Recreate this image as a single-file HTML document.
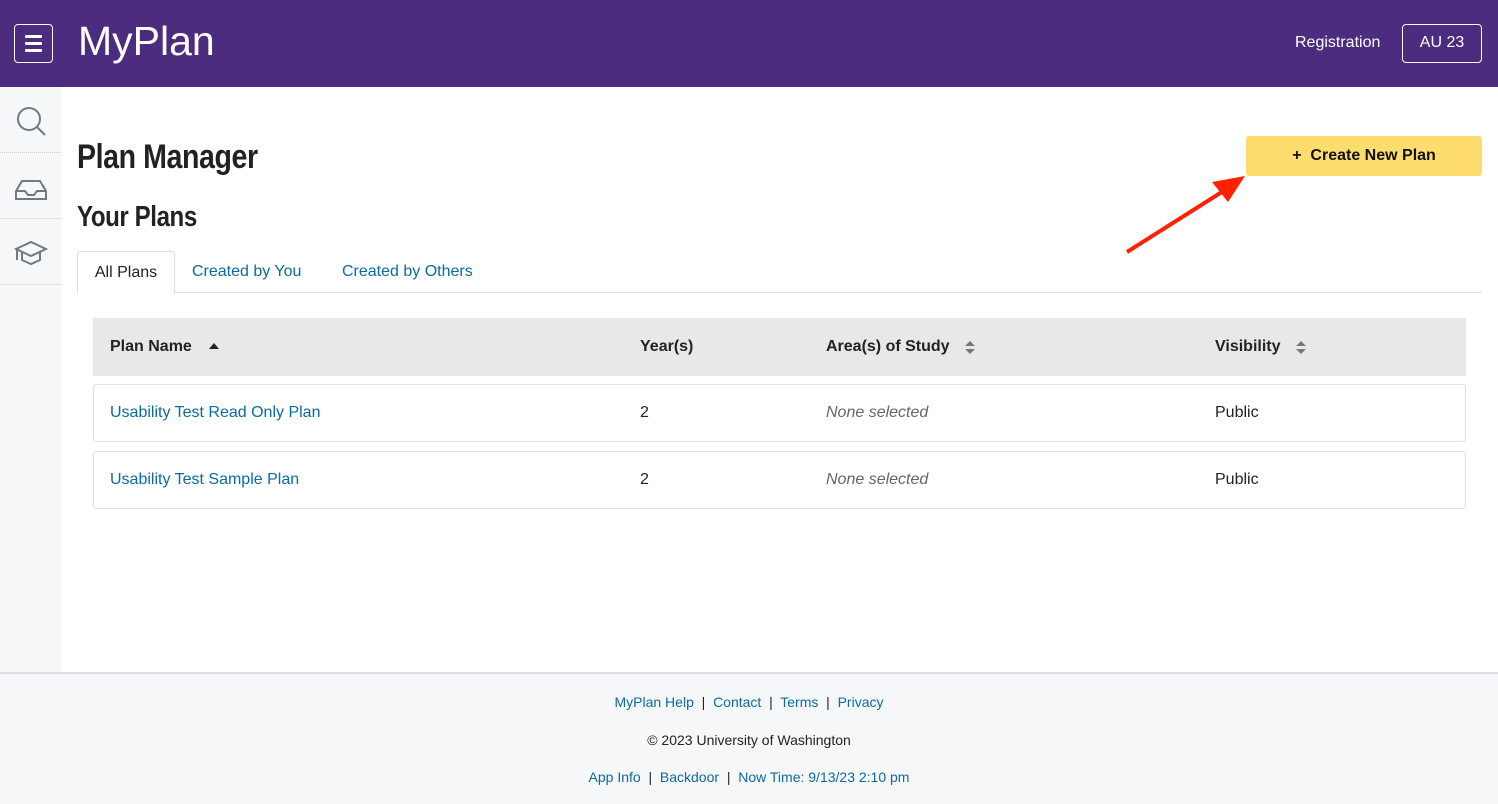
<!DOCTYPE html>
<html><head><meta charset="utf-8"><style>
*{box-sizing:border-box;margin:0;padding:0}
body{width:1498px;height:804px;overflow:hidden;font-family:"Liberation Sans",sans-serif;background:#fff;color:#222;position:relative}
.hdr{position:absolute;left:0;top:0;width:1498px;height:87px;background:#4b2c7f}
.burger{position:absolute;left:14px;top:24px;width:39px;height:39px;border:1.5px solid #fff;border-radius:4px}
.burger i{position:absolute;left:10px;width:17px;height:3px;background:#fff;border-radius:1px}
.logo{position:absolute;left:78px;top:18px;font-size:41px;color:#fff}
.reg{position:absolute;left:1295px;top:34px;color:#fff;font-size:16px}
.au{position:absolute;left:1402px;top:24px;width:80px;height:39px;border:1.5px solid #fff;border-radius:4px;color:#fff;font-size:16px;text-align:center;line-height:36px}
.side{position:absolute;left:0;top:87px;width:61px;height:586px;background:#f6f7f9}
.side div{height:66px;border-bottom:1px dotted #ccc;position:relative}
.side svg{position:absolute;left:14px;top:18px}
h1{position:absolute;left:77px;top:138px;font-size:34px;font-weight:bold;color:#222;letter-spacing:-0.5px;transform:scaleX(0.84);transform-origin:left}
h2{position:absolute;left:77px;top:201px;font-size:29px;font-weight:bold;color:#222;letter-spacing:-0.5px;transform:scaleX(0.83);transform-origin:left}
.btn{position:absolute;left:1246px;top:136px;width:236px;height:40px;background:#fddd6e;border-radius:3px;text-align:center;line-height:40px;font-size:16px;font-weight:bold;color:#111}
.tabs{position:absolute;left:77px;top:292px;width:1405px;border-top:1px solid #dde0e4}
.tab{position:absolute;top:251px;font-size:16px;color:#0b6aa2;line-height:42px}
.tab.on{left:77px;width:98px;height:43px;border:1px solid #dde0e4;border-bottom:1px solid #fff;border-radius:4px 4px 0 0;background:#fff;color:#222;text-align:center;z-index:2}
.th{position:absolute;left:93px;top:318px;width:1373px;height:58px;background:#e8e8e8;font-weight:bold;font-size:16px;color:#222}
.th span,.row span{position:absolute;top:0;line-height:58px}
.row{position:absolute;left:93px;width:1373px;height:58px;border:1px solid #dde0e4;border-radius:3px;font-size:16px}
.row span{line-height:56px}
.lnk{color:#0b6aa2}
.it{font-style:italic;color:#666}
.th svg{position:absolute;top:23px}
.foot{position:absolute;left:0;top:672px;width:1498px;height:132px;background:#f6f7f9;border-top:2px solid #dde0e4;text-align:center;font-size:14px;color:#222}
.foot p{position:absolute;width:100%}
.foot a{color:#0b6aa2;text-decoration:none}
</style></head><body>
<div class="hdr">
<div class="burger"><i style="top:10px"></i><i style="top:17px"></i><i style="top:24px"></i></div>
<div class="logo">MyPlan</div>
<div class="reg">Registration</div>
<div class="au">AU 23</div>
</div>
<div class="side">
<div><svg width="34" height="34" viewBox="0 0 34 34" fill="none" stroke="#707a80" stroke-width="2"><circle cx="15" cy="14" r="11"/><path d="M23 22l8 8"/></svg></div>
<div><svg width="34" height="34" viewBox="0 0 34 34" fill="none" stroke="#707a80" stroke-width="2"><path d="M2 20l6-10h18l6 10v8H2z M2 20h9l3 4h6l3-4h9"/></svg></div>
<div><svg width="34" height="34" viewBox="0 0 34 34" fill="none" stroke="#707a80" stroke-width="2"><path d="M2 12l15-7 15 7-15 7z M8 15v8l9 4 9-4v-8 M3 13v10"/></svg></div>
</div>
<h1>Plan Manager</h1>
<h2>Your Plans</h2>
<div class="btn">+&nbsp; Create New Plan</div>
<svg style="position:absolute;left:1120px;top:170px" width="130" height="90"><path d="M7 82L105 20" stroke="#ff2200" stroke-width="4"/><path d="M125 6L92 12 108 32z" fill="#ff2200"/></svg>
<div class="tab on">All Plans</div>
<div class="tab" style="left:192px">Created by You</div>
<div class="tab" style="left:342px">Created by Others</div>
<div class="tabs"></div>
<div class="th"><span style="left:17px">Plan Name</span>
<svg style="left:116px;top:25px" width="10" height="6"><path d="M0 6L5 0 10 6z" fill="#222"/></svg>
<span style="left:547px">Year(s)</span><span style="left:733px">Area(s) of Study</span>
<svg style="left:872px" width="10" height="13"><path d="M0 5L5 0 10 5zM0 8L5 13 10 8z" fill="#777"/></svg>
<span style="left:1122px">Visibility</span>
<svg style="left:1203px" width="10" height="13"><path d="M0 5L5 0 10 5zM0 8L5 13 10 8z" fill="#777"/></svg>
</div>
<div class="row" style="top:384px"><span class="lnk" style="left:16px">Usability Test Read Only Plan</span><span style="left:546px">2</span><span class="it" style="left:732px">None selected</span><span style="left:1121px">Public</span></div>
<div class="row" style="top:451px"><span class="lnk" style="left:16px">Usability Test Sample Plan</span><span style="left:546px">2</span><span class="it" style="left:732px">None selected</span><span style="left:1121px">Public</span></div>
<div class="foot">
<p style="top:20px"><a>MyPlan Help</a> &nbsp;|&nbsp; <a>Contact</a> &nbsp;|&nbsp; <a>Terms</a> &nbsp;|&nbsp; <a>Privacy</a></p>
<p style="top:58px">© 2023 University of Washington</p>
<p style="top:95px"><a>App Info</a> &nbsp;|&nbsp; <a>Backdoor</a> &nbsp;|&nbsp; <a>Now Time: 9/13/23 2:10 pm</a></p>
</div>
</body></html>
